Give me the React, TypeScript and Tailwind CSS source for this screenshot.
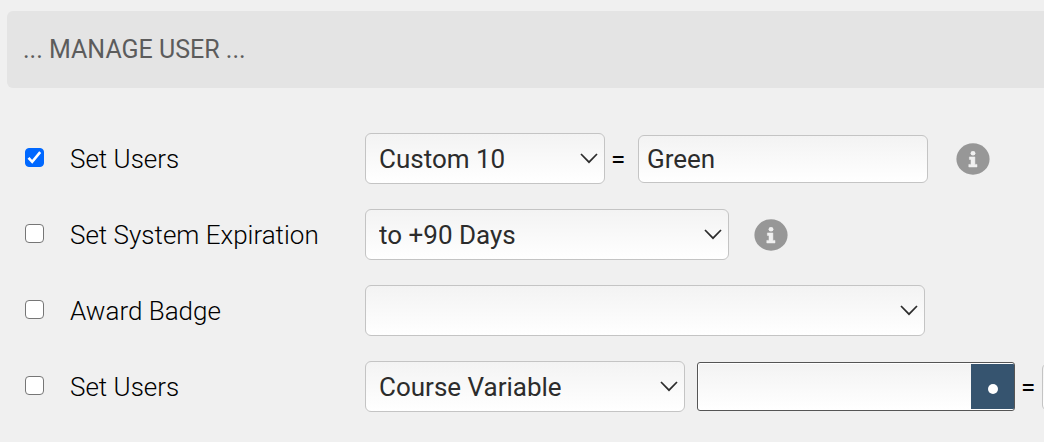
import { useState } from "react";
import type { ReactNode } from "react";
import clsx from "clsx";

interface ActionRowProps {
  id: string;
  label: string;
  defaultChecked?: boolean;
  children: ReactNode;
}

function ActionRow({ id, label, defaultChecked, children }: ActionRowProps) {
  const [checked, setChecked] = useState(Boolean(defaultChecked));

  return (
    <div className="flex items-center">
      <div className="flex w-[340px] shrink-0 items-center gap-[26px]">
        <span className="mb-[3px] grid shrink-0 place-items-center">
          <input
            id={id}
            type="checkbox"
            checked={checked}
            onChange={(e) => setChecked(e.target.checked)}
            className="col-start-1 row-start-1 h-[19px] w-[19px] appearance-none rounded-[4px] border border-[#767676] bg-white checked:border-[#0068ff] checked:bg-[#0068ff]"
          />
          {checked && (
            <svg
              viewBox="0 0 19 19"
              className="pointer-events-none col-start-1 row-start-1 h-[19px] w-[19px]"
              aria-hidden="true"
            >
              <path d="M3.5 9.8 7.2 13.8 15.2 4.2" fill="none" stroke="#fff" strokeWidth="2.6" />
            </svg>
          )}
        </span>
        <label htmlFor={id} className="whitespace-nowrap font-light text-black">
          {label}
        </label>
      </div>
      {children}
    </div>
  );
}

interface SelectBoxProps {
  label: string;
  options: string[];
  className: string;
}

function SelectBox({ label, options, className }: SelectBoxProps) {
  return (
    <div className={clsx("grid shrink-0 items-center", className)}>
      <select
        aria-label={label}
        className="col-start-1 row-start-1 h-[51px] w-full appearance-none rounded-md border border-[#c4c4c4] bg-linear-to-b from-[#f3f3f3] to-white pr-10 pl-[13px] text-[#2c2c2c]"
      >
        {options.map((option) => (
          <option key={option}>{option}</option>
        ))}
      </select>
      <svg
        viewBox="0 0 18 11"
        className="pointer-events-none col-start-1 row-start-1 mr-[7px] h-[11px] w-[18px] justify-self-end"
        aria-hidden="true"
      >
        <path d="M1 1 9 9.2 17 1" fill="none" stroke="#2c2c2c" strokeWidth="1.7" />
      </svg>
    </div>
  );
}

function InfoButton() {
  return (
    <button type="button" aria-label="More information" className="shrink-0">
      <svg viewBox="0 0 34 32" className="h-8 w-[34px]" aria-hidden="true">
        <ellipse cx="17" cy="16" rx="16.6" ry="15.7" fill="#979797" />
        <ellipse cx="17" cy="10.2" rx="2.4" ry="2.2" fill="#f0f0f0" />
        <path
          d="M13.4 13.9H18.9V21.4H21V24H12.8V21.4H15V16.5H13.4Z"
          fill="#f0f0f0"
          stroke="#f0f0f0"
          strokeWidth=".5"
          strokeLinejoin="round"
        />
      </svg>
    </button>
  );
}

const fieldStyle =
  "h-12 shrink-0 rounded-md border border-[#c4c4c4] bg-linear-to-b from-[#f3f3f3] to-white px-2 text-[#2c2c2c]";

export default function App() {
  return (
    <main className="min-h-screen overflow-x-hidden bg-[#f0f0f0] pt-[11px] font-['Roboto',sans-serif] text-[26px] leading-8">
      <h1 className="ml-[7px] flex h-[77px] items-center rounded-l-md bg-[#e4e4e4] px-4 text-[25px] text-[#5c5c5c]">
        ... MANAGE USER ...
      </h1>

      <form className="mt-[45px] flex flex-col gap-[25px] pl-[25px]">
        <ActionRow id="set-custom" label="Set Users" defaultChecked>
          <SelectBox label="User field" options={["Custom 10"]} className="w-60" />
          <span className="w-[33px] shrink-0 pl-[6px]">=</span>
          <input
            aria-label="Field value"
            defaultValue="Green"
            className={clsx(fieldStyle, "w-[290px]")}
          />
          <div className="flex pl-7">
            <InfoButton />
          </div>
        </ActionRow>

        <ActionRow id="set-expiration" label="Set System Expiration">
          <SelectBox label="Expiration" options={["to +90 Days"]} className="w-[364px]" />
          <div className="flex pl-[25px]">
            <InfoButton />
          </div>
        </ActionRow>

        <ActionRow id="award-badge" label="Award Badge">
          <SelectBox label="Badge" options={[""]} className="w-[560px]" />
        </ActionRow>

        <ActionRow id="set-variable" label="Set Users">
          <SelectBox label="User field" options={["Course Variable"]} className="w-80" />
          <div className="ml-3 flex h-[49px] w-[318px] shrink-0 overflow-hidden rounded-[3px] border border-[#555] bg-white py-px pl-px">
            <input
              aria-label="Variable name"
              className="min-w-0 flex-1 bg-linear-to-b from-[#f3f3f3] to-white px-2 text-[#2c2c2c]"
            />
            <button
              type="button"
              aria-label="Choose variable"
              className="flex w-[43px] items-center justify-center bg-[#36546f] pt-1"
            >
              <span className="h-[10px] w-[10px] rounded-full bg-white" />
            </button>
          </div>
          <span className="w-[27px] shrink-0 pl-[6px]">=</span>
          <input aria-label="Variable value" className={clsx(fieldStyle, "w-[290px]")} />
        </ActionRow>
      </form>
    </main>
  );
}
